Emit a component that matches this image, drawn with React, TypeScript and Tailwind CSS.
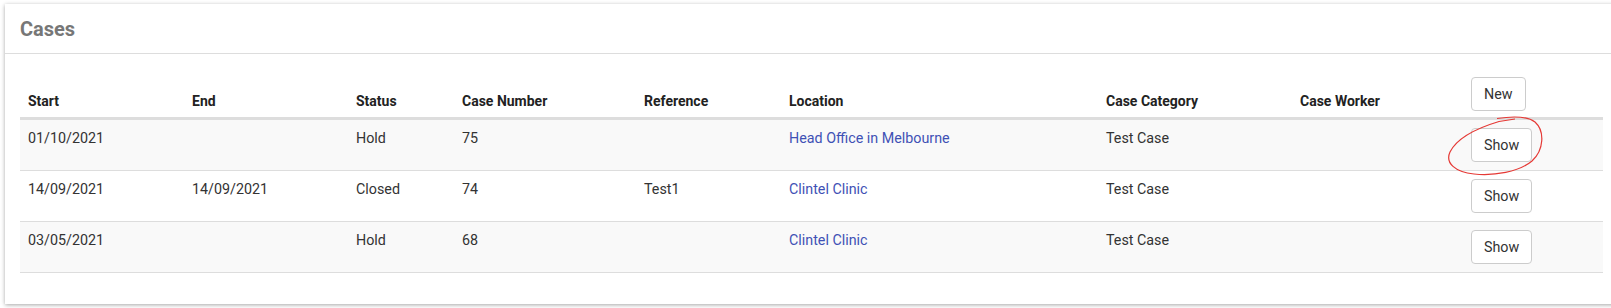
import React from "react";

type Case = {
  start: string;
  end: string;
  status: string;
  number: string;
  reference: string;
  location: string;
  category: string;
  worker: string;
};

const cases: Case[] = [
  {
    start: "01/10/2021",
    end: "",
    status: "Hold",
    number: "75",
    reference: "",
    location: "Head Office in Melbourne",
    category: "Test Case",
    worker: ""
  },
  {
    start: "14/09/2021",
    end: "14/09/2021",
    status: "Closed",
    number: "74",
    reference: "Test1",
    location: "Clintel Clinic",
    category: "Test Case",
    worker: ""
  },
  {
    start: "03/05/2021",
    end: "",
    status: "Hold",
    number: "68",
    reference: "",
    location: "Clintel Clinic",
    category: "Test Case",
    worker: ""
  }
];

const cols =
  "grid grid-cols-[164px_164px_106px_182px_145px_317px_194px_171px_140px]";

const Button = ({ children }: { children: React.ReactNode }) => (
  <button className="h-[34px] px-3 rounded border border-[#ccc] bg-white text-[14.3px] leading-5 text-[#333]">
    {children}
  </button>
);

const Header = () => {
  const labels = [
    "Start",
    "End",
    "Status",
    "Case Number",
    "Reference",
    "Location",
    "Case Category",
    "Case Worker"
  ];
  return (
    <div className={`${cols} h-[51px] border-b-[3px] border-[#ddd]`}>
      {labels.map(l => (
        <div
          key={l}
          className="px-2 pb-[6px] self-end text-[14px] font-bold text-[#222]"
        >
          {l}
        </div>
      ))}
      <div className="px-2 pt-2">
        <Button>New</Button>
      </div>
    </div>
  );
};

const Row = ({ item, striped }: { item: Case; striped: boolean }) => (
  <div
    className={`${cols} h-[51px] border-b border-[#ddd] ${
      striped ? "bg-[#f9f9f9]" : "bg-white"
    }`}
  >
    <div className="px-2 pt-2">{item.start}</div>
    <div className="px-2 pt-2">{item.end}</div>
    <div className="px-2 pt-2">{item.status}</div>
    <div className="px-2 pt-2">{item.number}</div>
    <div className="px-2 pt-2">{item.reference}</div>
    <div className="px-2 pt-2">
      <a className="text-[#3f51b5]">{item.location}</a>
    </div>
    <div className="px-2 pt-2">{item.category}</div>
    <div className="px-2 pt-2">{item.worker}</div>
    <div className="px-2 pt-2">
      <Button>Show</Button>
    </div>
  </div>
);

export default function App() {
  return (
    <div className="relative w-[1611px] h-[308px] overflow-hidden bg-white font-['Roboto',sans-serif] text-[14.3px] leading-5 text-[#333]">
      <div className="ml-[5px] mt-[4px] w-[1613px] bg-white shadow-[0_1px_4px_rgba(0,0,0,0.35)]">
        <div className="h-[50px] px-[15px] flex items-center border-b border-[#ddd]">
          <h3 className="text-[20px] font-bold text-[#777]">Cases</h3>
        </div>
        <div className="px-[15px] pt-[15px] pb-[31px]">
          <Header />
          {cases.map((c, i) => (
            <Row key={i} item={c} striped={i % 2 === 0} />
          ))}
        </div>
      </div>

      <svg
        className="absolute left-0 top-0 pointer-events-none"
        width="1611"
        height="308"
        viewBox="0 0 1611 308"
      >
        <path
          d="M1497 118.5 C1510 116.5 1527 116 1535 122 C1545 131 1544 150 1532 161 C1519 172 1494 176 1474 174 C1455 172 1445 163 1450 152 C1456 140 1474 129 1499 121.5 L1515 119"
          fill="none"
          stroke="#e53935"
          strokeWidth="1.2"
        />
      </svg>
    </div>
  );
}
